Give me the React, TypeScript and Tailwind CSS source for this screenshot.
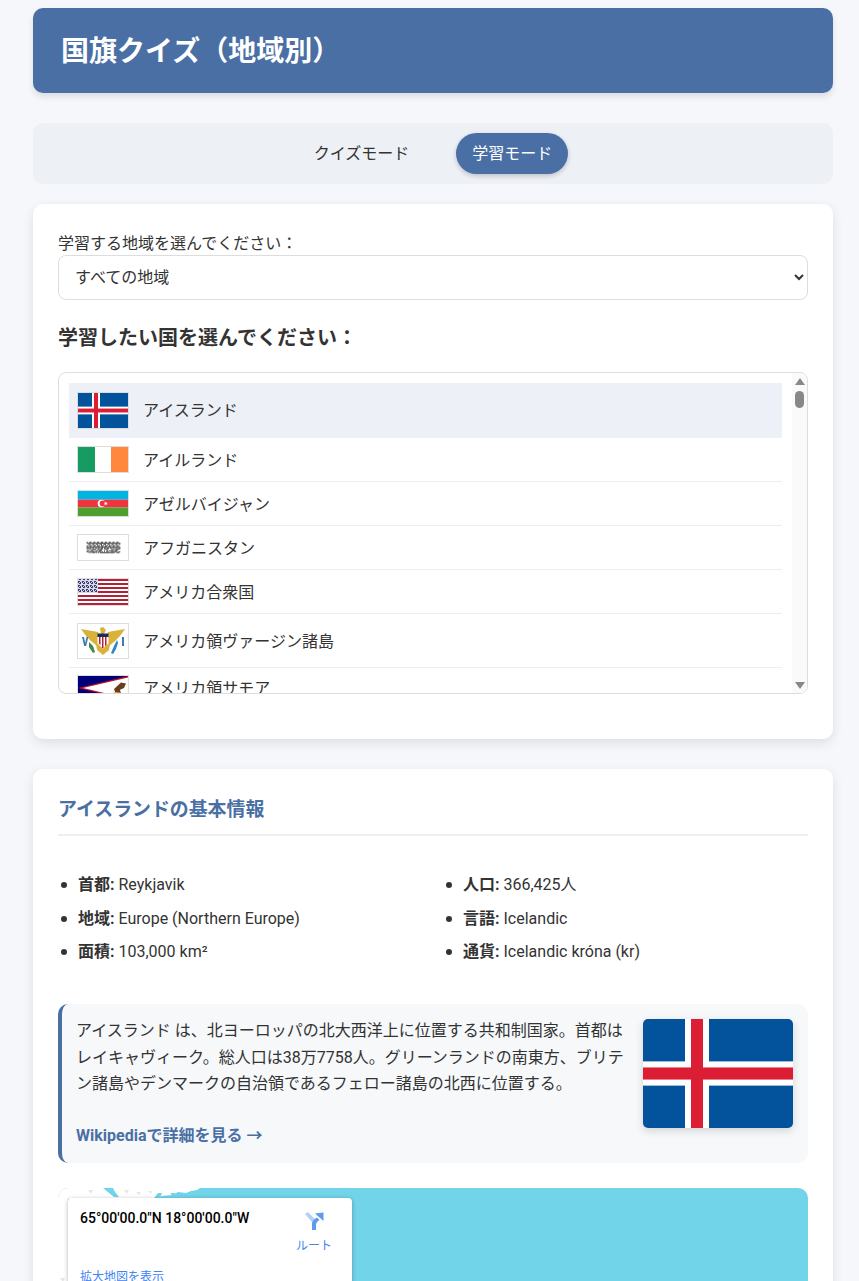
const countries = [
  { name: "アイスランド", h: "h-[55px]", flag: "iceland", flagH: "h-[37px]", active: true },
  { name: "アイルランド", h: "h-[44px]", flag: "ireland", flagH: "h-[27px]" },
  { name: "アゼルバイジャン", h: "h-[44px]", flag: "azerbaijan", flagH: "h-[27px]" },
  { name: "アフガニスタン", h: "h-[44px]", flag: "afghanistan", flagH: "h-[27px]" },
  { name: "アメリカ合衆国", h: "h-[44px]", flag: "usa", flagH: "h-[28px]" },
  { name: "アメリカ領ヴァージン諸島", h: "h-[54px]", flag: "usvi", flagH: "h-[36px]" },
  { name: "アメリカ領サモア", h: "h-[40px]", flag: "samoa", flagH: "h-[26px]" },
];

const factsLeft = [
  ["首都:", "Reykjavik"],
  ["地域:", "Europe (Northern Europe)"],
  ["面積:", "103,000 km²"],
];

const factsRight = [
  ["人口:", "366,425人"],
  ["言語:", "Icelandic"],
  ["通貨:", "Icelandic króna (kr)"],
];

function IcelandFlag() {
  return (
    <svg viewBox="0 0 25 18" preserveAspectRatio="none" className="block w-full h-full">
      <rect width="25" height="18" fill="#02529c" />
      <rect x="7" width="4" height="18" fill="#fff" />
      <rect y="7" width="25" height="4" fill="#fff" />
      <rect x="8" width="2" height="18" fill="#dc1e35" />
      <rect y="8" width="25" height="2" fill="#dc1e35" />
    </svg>
  );
}

function Dither({ x, y, w, h, color, seed = 4 }: { x: number; y: number; w: number; h: number; color: string; seed?: number }) {
  const cells = [];
  for (let r = 0; r < h; r++) {
    for (let c = 0; c < w; c++) {
      if (((r * 13 + c * 7) ^ (c * r)) % seed < 2) {
        cells.push(<rect key={r + "-" + c} x={x + c} y={y + r} width="1" height="1" fill={color} />);
      }
    }
  }
  return <g>{cells}</g>;
}

function FlagArt({ kind }: { kind: string }) {
  if (kind === "iceland") return <IcelandFlag />;
  if (kind === "ireland") {
    return (
      <div className="flex w-full h-full">
        <div className="flex-1 bg-[#169b62]" />
        <div className="flex-1 bg-white" />
        <div className="flex-1 bg-[#ff883e]" />
      </div>
    );
  }
  if (kind === "azerbaijan") {
    return (
      <svg viewBox="0 0 50 26" preserveAspectRatio="none" className="block w-full h-full">
        <rect width="50" height="9" fill="#00b5e2" />
        <rect y="9" width="50" height="8" fill="#ef3340" />
        <rect y="17" width="50" height="9" fill="#509e2f" />
        <circle cx="23.500" cy="13" r="3.800" fill="#fff" />
        <circle cx="24.600" cy="13" r="3" fill="#ef3340" />
        <path d="M27.800 10.800l.5 1.300 1.500-.1-1 1 1 1-1.500-.1-.5 1.300-.5-1.300-1.400.1.900-1-.9-1 1.400.1z" fill="#fff" />
      </svg>
    );
  }
  if (kind === "afghanistan") {
    return (
      <svg viewBox="0 0 50 26" className="block w-full h-full bg-white">
        <Dither x={8} y={7} w={35} h={6} color="#222" />
        <Dither x={8} y={13} w={35} h={6} color="#333" seed={3} />
      </svg>
    );
  }
  if (kind === "usa") {
    const stripes = [0, 2, 4, 6, 8, 10, 12];
    return (
      <svg viewBox="0 0 50 26" preserveAspectRatio="none" className="block w-full h-full">
        <rect width="50" height="26" fill="#fff" />
        {stripes.map((s) => (
          <rect key={s} y={s * 2} width="50" height="2" fill="#b22234" />
        ))}
        <rect width="20" height="14" fill="#3c3b6e" />
        <Dither x={0} y={0} w={20} h={14} color="#d6d6e6" />
      </svg>
    );
  }
  if (kind === "usvi") {
    return (
      <svg viewBox="0 0 50 34" className="block w-full h-full bg-white">
        <path d="M3 5l17 3 2 6-3 8-6-5-5-5zM47 5l-17 3-2 6 3 8 6-5 5-5z" fill="#d9b13b" />
        <path d="M17 12h16l-2 14-6 5-6-5z" fill="#d9b13b" />
        <path d="M22 4l3-1 3 3-2 4h-3z" fill="#d9b13b" />
        <rect x="19.500" y="9.500" width="11" height="3.500" fill="#1c2a5e" />
        <path d="M19.500 13h11v6.500l-5.500 5-5.500-5z" fill="#fff" />
        <path d="M21 13h1.500v8l-1.500-1.200zM24 13h1.500v11h-1.500zM27 13h1.500v8l-1.500 1.200z" fill="#b22234" />
        <path d="M4 13h2l1.200 6 1.300-6h1.800l-2.200 9H6.200z" fill="#3a7ab0" />
        <rect x="44" y="13" width="2" height="9" fill="#3a7ab0" />
        <path d="M11 18l4 4 2 6-2 1-4-6z" fill="#3f8a45" />
        <path d="M39 16l1 3-2 6-3 5-2-1 3-7z" fill="#2f86c0" />
      </svg>
    );
  }
  return (
    <svg viewBox="0 0 50 26" preserveAspectRatio="none" className="block w-full h-full">
      <rect width="50" height="26" fill="#00007a" />
      <path d="M50 0L0 13 50 26z" fill="#bd1021" />
      <path d="M50 1.500L5 13 50 24.500z" fill="#fff" />
      <path d="M36 14l7-7 5 1-2 5-4 2 1 4-5 1z" fill="#6b3d1f" />
      <path d="M34 17l8 1-1 2z" fill="#e0b040" />
    </svg>
  );
}

function CountryRow({ item }: { item: (typeof countries)[number] }) {
  return (
    <div className={`flex items-center pl-2 shrink-0 border-b ${item.h} ${item.active ? "bg-[#edf0f7] border-transparent" : "border-[#eeeeee]"}`}>
      <div className={`w-[52px] shrink-0 self-center border border-[#dddddd] overflow-hidden ${item.flagH}`}>
        <FlagArt kind={item.flag} />
      </div>
      <span className="ml-3.5 pt-[2px] text-base">{item.name}</span>
    </div>
  );
}

function FactList({ items }: { items: string[][] }) {
  return (
    <ul className="flex flex-col gap-[9.500px]">
      {items.map(([label, value]) => (
        <li key={label} className="flex items-center leading-6">
          <span className="ml-[3px] mr-[11px] w-1.5 h-1.5 rounded-full bg-[#333333]" />
          <span>
            <strong className="font-bold">{label}</strong> {value}
          </span>
        </li>
      ))}
    </ul>
  );
}

function MapPreview() {
  return (
    <div className="relative mt-[25px] h-[300px] rounded-[10px] overflow-hidden bg-[#71d4e9]">
      <svg viewBox="0 0 300 100" className="w-[300px] h-[100px]">
        <path d="M0 0h142l-3 2-6 1-5 2-8-1-6 3-10 1-8 3H10v87H0z" fill="#fff" />
        <path d="M45 0h10l2 4 4 5-5 0-5-4zM100 5l4 0-2 5-6 0zM112 5h5l-2 3z" fill="#71d4e9" />
        <path d="M30 2h5l-2 4zM66 2h5l-2 4zM78 4h5l-2 3zM90 3h4l-1 3zM2 90h5l-2 4z" fill="#e4e8e4" />
      </svg>
      <div className="absolute left-2.5 top-2.5 w-[284px] h-[140px] bg-white rounded-sm shadow-[0_1px_4px_rgba(0,0,0,0.3)] font-['Roboto','Noto_Sans_CJK_JP',sans-serif]">
        <div className="flex justify-between pl-3 pr-5">
          <p className="pt-[10px] text-sm font-medium text-black leading-5">65°00'00.0"N 18°00'00.0"W</p>
          <div className="flex flex-col items-center pt-3">
            <svg viewBox="0 0 20 20" className="w-5 h-5">
              <path d="M1 4l3-2 8 8.500V20H8v-8z" fill="#b3d0f5" />
              <path d="M8 20v-6c0-3 2-5 5-6.500l2.500 2.500C13.500 11 12 13 12 15v5z" fill="#5f9bea" />
              <path d="M11 3.500l8.500-1V11z" fill="#5f9bea" />
            </svg>
            <span className="mt-2 text-xs leading-4 text-[#4285f4]">ルート</span>
          </div>
        </div>
        <p className="pl-3 mt-[15px] text-xs leading-4 text-[#4285f4]">拡大地図を表示</p>
      </div>
    </div>
  );
}

export default function App() {
  return (
    <div className="h-[1281px] overflow-hidden bg-[#f5f7fb] text-[#333333] font-['Roboto','Noto_Sans_CJK_JP',sans-serif]">
      <div className="w-[800px] ml-[33px] pt-2">
        <header className="h-[85px] flex items-center pl-7 rounded-[10px] bg-[#4a6fa5] shadow-[0_4px_6px_rgba(0,0,0,0.1)]">
          <h1 className="pt-[2px] text-[28px] font-bold text-white">国旗クイズ（地域別）</h1>
        </header>

        <nav className="mt-[30px] h-[61px] flex justify-center items-center gap-[31px] rounded-[10px] bg-[#edf0f5]">
          <button className="h-[41px] px-4 pt-px rounded-full text-base">クイズモード</button>
          <button className="h-[41px] px-4 pt-px rounded-full text-base text-white bg-[#4a6fa5] shadow-[0_2px_5px_rgba(0,0,0,0.2)]">学習モード</button>
        </nav>

        <section className="mt-5 h-[535px] p-[25px] rounded-[10px] bg-white shadow-[0_4px_12px_rgba(0,0,0,0.1)]">
          <label className="block mt-[5px] leading-5 text-base">学習する地域を選んでください：</label>
          <select className="block w-full h-[45px] mt-px px-3 rounded-lg border border-[#dddddd] bg-white text-base">
            <option>すべての地域</option>
          </select>
          <h3 className="mt-6 text-xl font-bold leading-7">学習したい国を選んでください：</h3>
          <div className="mt-5 h-[322px] flex rounded-lg border border-[#dddddd] overflow-hidden">
            <div className="flex-1 flex flex-col pt-2.5 pl-2.5 pr-2.5 overflow-hidden">
              {countries.map((c) => (
                <CountryRow key={c.name} item={c} />
              ))}
            </div>
            <div className="w-[15px] shrink-0 flex flex-col items-center bg-[#fafafa] pt-[5px] pb-[4px]">
              <svg viewBox="0 0 10 7" className="w-2.5 h-[7px]"><path d="M5 0l5 7H0z" fill="#888888" /></svg>
              <div className="mt-[6px] w-[9px] h-[17px] rounded-full bg-[#888888]" />
              <svg viewBox="0 0 10 7" className="w-2.5 h-[7px] mt-auto"><path d="M0 0h10L5 7z" fill="#888888" /></svg>
            </div>
          </div>
        </section>

        <section className="mt-[30px] px-[25px] pt-[27px] pb-5 rounded-[10px] bg-white shadow-[0_4px_12px_rgba(0,0,0,0.1)]">
          <h3 className="text-[18.900px] font-bold leading-7 text-[#4a6fa5] pb-2.5 border-b-2 border-[#eeeeee]">アイスランドの基本情報</h3>
          <div className="mt-[37px] grid grid-cols-2 gap-x-5">
            <FactList items={factsLeft} />
            <FactList items={factsRight} />
          </div>
          <div className="mt-[40px] flex h-[159px] pl-3.5 pr-[15px] pt-[15px] rounded-[10px] border-l-4 border-[#4a6fa5] bg-[#f6f8fa]">
            <div className="flex-1">
              <p className="leading-[26.500px] -mt-[1px]">アイスランド は、北ヨーロッパの北大西洋上に位置する共和制国家。首都はレイキャヴィーク。総人口は38万7758人。グリーンランドの南東方、ブリテン諸島やデンマークの自治領であるフェロー諸島の北西に位置する。</p>
              <p className="mt-[26px] leading-6 font-bold text-[#4a6fa5]">Wikipediaで詳細を見る →</p>
            </div>
            <div className="ml-[18px] w-[150px] h-[109px] shrink-0 rounded-[5px] overflow-hidden shadow-[0_3px_8px_rgba(0,0,0,0.15)]">
              <IcelandFlag />
            </div>
          </div>
          <MapPreview />
        </section>
      </div>
    </div>
  );
}
